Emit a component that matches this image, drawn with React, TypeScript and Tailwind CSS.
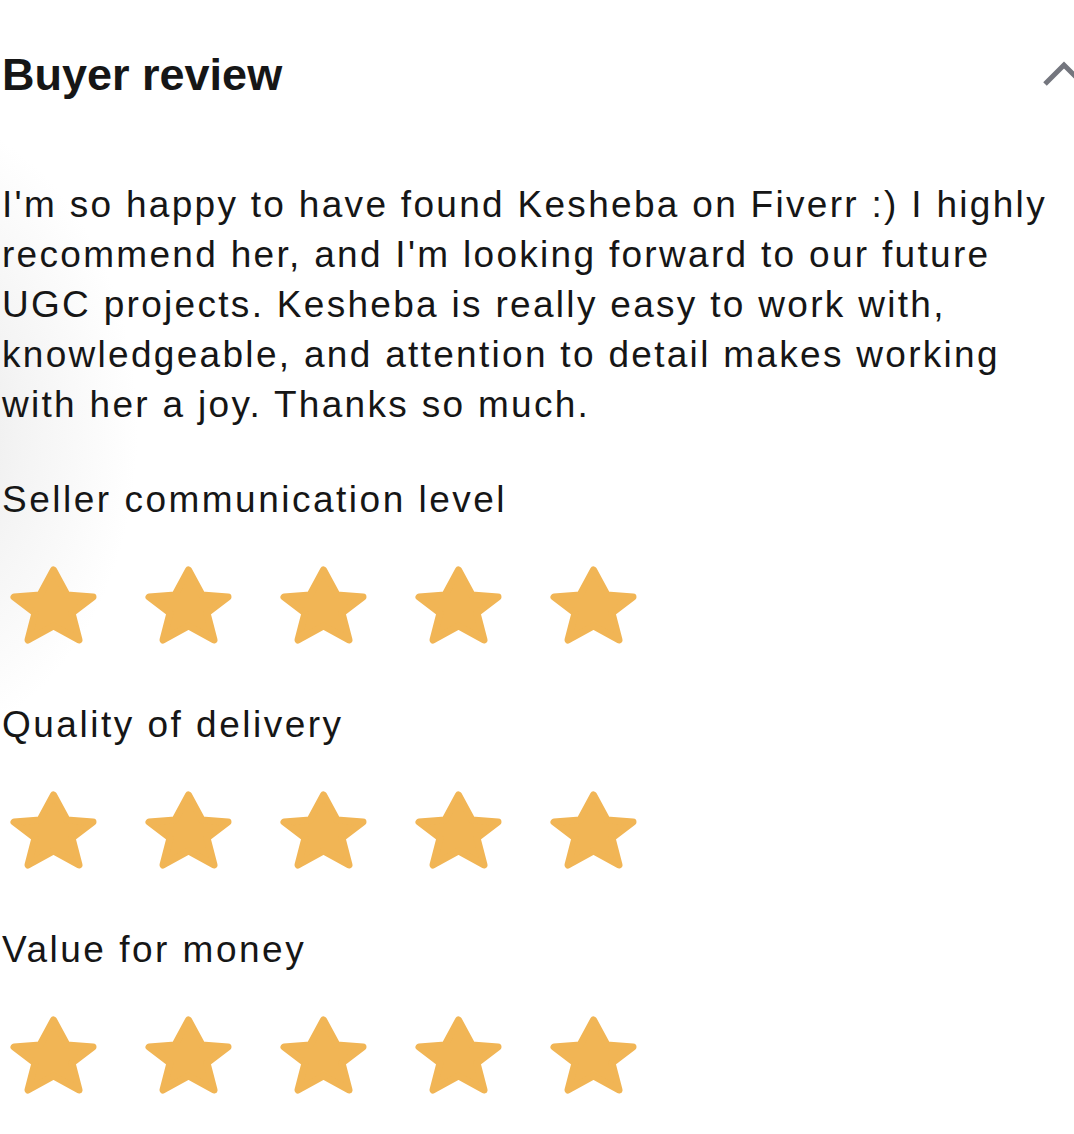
import React from "react";

const STAR_COLOR = "#F1B555";

function Star() {
  return (
    <svg width="110" height="100" viewBox="0 0 110 100" className="shrink-0">
      <polygon
        points="53.5,14 67,39 93,41 72,57 79,84 53.5,70 28,84 35,57 14,41 40,39"
        fill={STAR_COLOR}
        stroke={STAR_COLOR}
        strokeWidth="7"
        strokeLinejoin="round"
      />
    </svg>
  );
}

function StarRow() {
  return (
    <div className="flex gap-[25px]">
      {[0, 1, 2, 3, 4].map((i) => (
        <Star key={i} />
      ))}
    </div>
  );
}

function Rating({ label }: { label: string }) {
  return (
    <div className="flex flex-col">
      <div className="pl-[2px] text-[37px] leading-[50px] tracking-[2.5px]">{label}</div>
      <div className="mt-[31px] mb-[44px]">
        <StarRow />
      </div>
    </div>
  );
}

const lines = [
  "I'm so happy to have found Kesheba on Fiverr :) I highly",
  "recommend her, and I'm looking forward to our future",
  "UGC projects. Kesheba is really easy to work with,",
  "knowledgeable, and attention to detail makes working",
  "with her a joy. Thanks so much.",
];

export default function App() {
  return (
    <div
      className="relative w-[1074px] h-[1134px] overflow-hidden bg-white text-[#161616]"
      style={{ fontFamily: '"Liberation Sans", Arial, sans-serif' }}
    >
      {/* soft grey shade along the left edge */}
      <div className="pointer-events-none absolute left-[-90px] top-[110px] h-[640px] w-[230px] bg-[radial-gradient(ellipse_at_left,#e6e6e6_0%,#f4f4f4_35%,transparent_70%)]" />

      <div className="relative flex flex-col pt-[47px]">
        <div className="flex items-start justify-between">
          <h2 className="pl-[2px] text-[45px] font-bold leading-[56px]">Buyer review</h2>
          <svg
            width="40"
            height="28"
            viewBox="0 0 40 28"
            className="mt-[14px] mr-[-7px]"
            fill="none"
            stroke="#74767e"
            strokeWidth="5"
          >
            <polyline points="4,23 23,4 42,23" />
          </svg>
        </div>

        <p className="mt-[77px] pl-[2px] text-[37px] leading-[50px] tracking-[2.3px] whitespace-nowrap">
          {lines.map((l, i) => (
            <span key={i} className="block">
              {l}
            </span>
          ))}
        </p>

        <div className="mt-[45px] flex flex-col">
          <Rating label="Seller communication level" />
          <Rating label="Quality of delivery" />
          <Rating label="Value for money" />
        </div>
      </div>
    </div>
  );
}
